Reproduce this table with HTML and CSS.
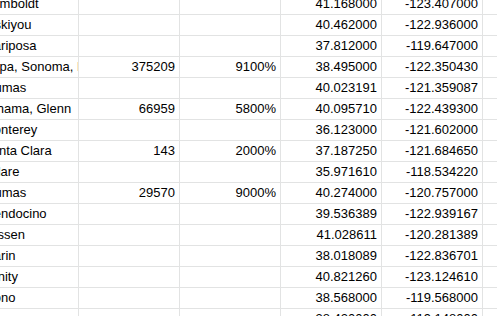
FILE: index.html
```html
<!DOCTYPE html>
<html>
<head>
<meta charset="utf-8">
<link rel="stylesheet" href="styles.css">
</head>
<body>
<div class="sheet">
  <div class="c t">Humboldt</div><div class="c"></div><div class="c"></div><div class="c n">41.168000</div><div class="c n">-123.407000</div><div class="c"></div>
  <div class="c t">Siskiyou</div><div class="c"></div><div class="c"></div><div class="c n">40.462000</div><div class="c n">-122.936000</div><div class="c"></div>
  <div class="c t">Mariposa</div><div class="c"></div><div class="c"></div><div class="c n">37.812000</div><div class="c n">-119.647000</div><div class="c"></div>
  <div class="c t">Napa, Sonoma, Marin</div><div class="c n">375209</div><div class="c n">9100%</div><div class="c n">38.495000</div><div class="c n">-122.350430</div><div class="c"></div>
  <div class="c t">Plumas</div><div class="c"></div><div class="c"></div><div class="c n">40.023191</div><div class="c n">-121.359087</div><div class="c"></div>
  <div class="c t">Tehama, Glenn</div><div class="c n">66959</div><div class="c n">5800%</div><div class="c n">40.095710</div><div class="c n">-122.439300</div><div class="c"></div>
  <div class="c t">Monterey</div><div class="c"></div><div class="c"></div><div class="c n">36.123000</div><div class="c n">-121.602000</div><div class="c"></div>
  <div class="c t">Santa Clara</div><div class="c n">143</div><div class="c n">2000%</div><div class="c n">37.187250</div><div class="c n">-121.684650</div><div class="c"></div>
  <div class="c t">Tulare</div><div class="c"></div><div class="c"></div><div class="c n">35.971610</div><div class="c n">-118.534220</div><div class="c"></div>
  <div class="c t">Plumas</div><div class="c n">29570</div><div class="c n">9000%</div><div class="c n">40.274000</div><div class="c n">-120.757000</div><div class="c"></div>
  <div class="c t">Mendocino</div><div class="c"></div><div class="c"></div><div class="c n">39.536389</div><div class="c n">-122.939167</div><div class="c"></div>
  <div class="c t">Lassen</div><div class="c"></div><div class="c"></div><div class="c n">41.028611</div><div class="c n">-120.281389</div><div class="c"></div>
  <div class="c t">Marin</div><div class="c"></div><div class="c"></div><div class="c n">38.018089</div><div class="c n">-122.836701</div><div class="c"></div>
  <div class="c t">Trinity</div><div class="c"></div><div class="c"></div><div class="c n">40.821260</div><div class="c n">-123.124610</div><div class="c"></div>
  <div class="c t">Mono</div><div class="c"></div><div class="c"></div><div class="c n">38.568000</div><div class="c n">-119.568000</div><div class="c"></div>
  <div class="c t"></div><div class="c"></div><div class="c"></div><div class="c n">38.420000</div><div class="c n">-119.148000</div><div class="c"></div>
</div>
</body>
</html>
```

FILE: styles.css
```css
html, body {
  margin: 0;
  padding: 0;
  background: #ffffff;
  overflow: hidden;
}

.sheet {
  display: grid;
  grid-template-columns: 101px 101px 101px 101px 101px 120px;
  grid-auto-rows: 21px;
  margin: -6px 0 0 -22px;
  font-family: "Liberation Sans", Arial, sans-serif;
  font-size: 13px;
  color: #000000;
}

.c {
  box-sizing: border-box;
  border-right: 1px solid #e2e3e3;
  border-bottom: 1px solid #e2e3e3;
  line-height: 20px;
  white-space: nowrap;
  overflow: hidden;
}

.t {
  padding: 0 3px 0 5px;
  text-align: left;
}

.n {
  padding: 0 4px 0 3px;
  text-align: right;
}
```
